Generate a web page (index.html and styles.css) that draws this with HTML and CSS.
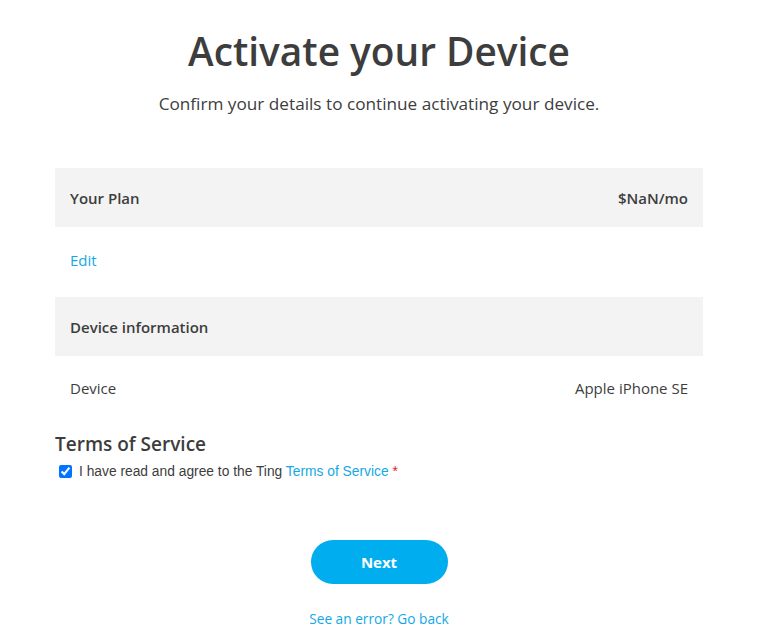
FILE: index.html
```html
<!DOCTYPE html>
<html>
<head>
<meta charset="utf-8">
<link rel="stylesheet" href="styles.css">
</head>
<body>
<main class="page">
  <h1 class="title">Activate your Device</h1>
  <p class="subtitle">Confirm your details to continue activating your device.</p>

  <section class="panel">
    <div class="row row-head">
      <span>Your Plan</span>
      <span>$NaN/mo</span>
    </div>
    <div class="row row-body">
      <a class="link" href="#">Edit</a>
    </div>
    <div class="row row-head">
      <span>Device information</span>
    </div>
    <div class="row row-body">
      <span>Device</span>
      <span>Apple iPhone SE</span>
    </div>
  </section>

  <section class="terms">
    <h2 class="terms-title">Terms of Service</h2>
    <label class="agree">
      <input type="checkbox" checked>
      <span>I have read and agree to the Ting <a class="link" href="#">Terms of Service</a> <span class="req">*</span></span>
    </label>
  </section>

  <div class="actions">
    <button class="next">Next</button>
    <a class="back" href="#">See an error? Go back</a>
  </div>
</main>
</body>
</html>
```

FILE: styles.css
```css
* { box-sizing: border-box; }
html, body { margin: 0; padding: 0; background: #fff; }
body {
  font-family: "Open Sans", "Liberation Sans", sans-serif;
  color: #3d3d3d;
}
.page {
  width: 648px;
  margin-left: 55px;
  display: flex;
  flex-direction: column;
}
.title {
  margin: 26px 0 0;
  text-align: center;
  font-size: 38.8px;
  font-weight: 600;
  line-height: 50px;
  color: #3d3d3d;
}
.subtitle {
  margin: 16px 0 0;
  text-align: center;
  font-size: 17.2px;
  line-height: 24px;
  color: #3d3d3d;
}
.panel {
  margin-top: 52px;
  display: flex;
  flex-direction: column;
}
.row {
  display: flex;
  justify-content: space-between;
  align-items: center;
  padding: 0 15px;
  font-size: 15px;
}
.row-head {
  height: 59px;
  background: #f3f3f3;
  font-weight: 600;
}
.row-body {
  height: 70px;
  padding-bottom: 5px;
}
.row-body:last-child { height: 64px; padding-bottom: 0; }
.link { color: #14a8e6; text-decoration: none; }
.terms { margin-top: 11px; }
.terms-title {
  margin: 0;
  font-size: 19px;
  font-weight: 600;
  line-height: 26px;
}
.agree {
  display: flex;
  align-items: center;
  gap: 7px;
  margin-top: 7px;
  padding-left: 4px;
  font-family: "Liberation Sans", Arial, sans-serif;
  font-size: 13.8px;
  color: #3d3d3d;
}
.agree input { margin: 0; width: 13px; height: 13px; }
.req { color: #e0161b; }
.actions {
  display: flex;
  flex-direction: column;
  align-items: center;
  margin-top: 61px;
}
.next {
  width: 137px;
  height: 44px;
  border: none;
  border-radius: 22px;
  background: #00adee;
  color: #fff;
  font-family: "Open Sans", "Liberation Sans", sans-serif;
  font-size: 15px;
  font-weight: 700;
}
.back {
  margin-top: 25px;
  font-size: 13.7px;
  color: #14a8e6;
  text-decoration: none;
}
```
